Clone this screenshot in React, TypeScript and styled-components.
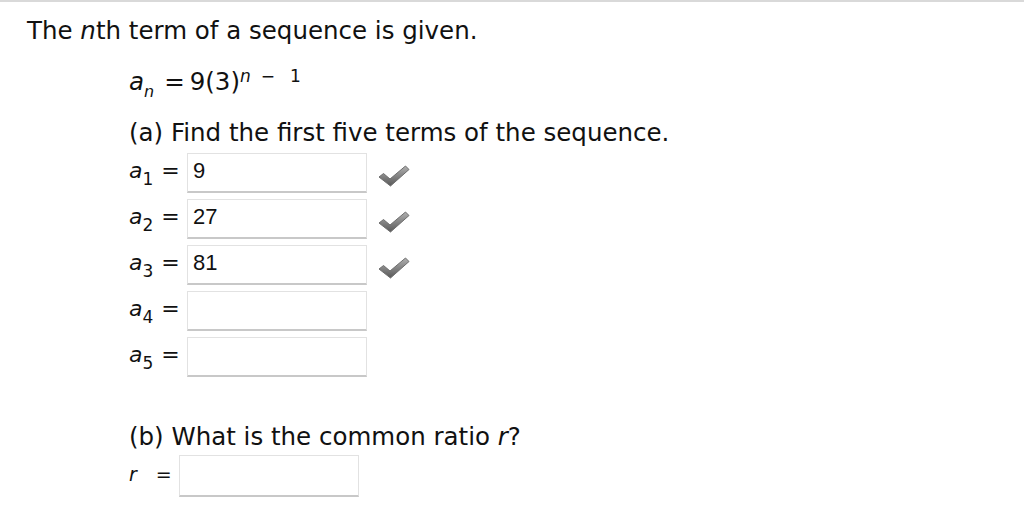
import React from "react";
import styled, { createGlobalStyle } from "styled-components";

const Global = createGlobalStyle`
  html, body { margin: 0; padding: 0; background: #fff; }
  body { font-family: "DejaVu Sans", Verdana, sans-serif; color: #111; }
`;

const Page = styled.div`
  border-top: 2px solid #d9d9d9;
  padding: 15px 0 0 27px;
  font-size: 24.5px;
  line-height: 28px;
`;

const Intro = styled.div`
  margin-bottom: 23px;
`;

const Block = styled.div`
  padding-left: 102px;
  display: flex;
  flex-direction: column;
`;

const Formula = styled.div`
  margin-bottom: 23px;
  white-space: nowrap;
`;

const Part = styled.div<{ $gap?: number }>`
  margin-top: ${(p) => p.$gap ?? 0}px;
  margin-bottom: 3px;
`;

const Var = styled.i`
  font-style: italic;
`;

const Sub = styled.sub<{ $size?: number }>`
  font-size: ${(p) => p.$size ?? 16}px;
  vertical-align: -7px;
  line-height: 0;
`;

const Sup = styled.sup`
  font-size: 17px;
  vertical-align: 8px;
  line-height: 0;
`;

const Op = styled.span<{ $l: number; $r: number }>`
  margin: 0 ${(p) => p.$r}px 0 ${(p) => p.$l}px;
`;

const Row = styled.div<{ $h?: number }>`
  display: flex;
  align-items: center;
  height: ${(p) => p.$h ?? 46}px;
`;

const Label = styled.div<{ $w: number; $size?: number }>`
  width: ${(p) => p.$w}px;
  white-space: pre;
  padding-bottom: 5px;
  font-size: ${(p) => p.$size ?? 22}px;
`;

const Box = styled.div<{ $h?: number }>`
  width: 173px;
  height: ${(p) => p.$h ?? 33}px;
  border: 1px solid #e2e2e2;
  border-bottom: 2px solid #c8c8c8;
  display: flex;
  align-items: center;
  padding: 0 0 4px 5px;
  box-sizing: content-box;
  font-family: "Liberation Sans", Arial, sans-serif;
  font-size: 22px;
  color: #111;
`;

const Check = styled.svg`
  margin: 6px 0 0 10px;
  width: 34px;
  height: 24px;
`;

const CheckMark = () => (
  <Check viewBox="0 0 34 24">
    <defs>
      <linearGradient id="cg" x1="0" y1="0" x2="0" y2="1">
        <stop offset="0" stopColor="#b0b0b0" />
        <stop offset="1" stopColor="#585858" />
      </linearGradient>
    </defs>
    <path
      d="M2 13 L6.5 9.5 L13 15 L28.5 2 L32 5.5 L13.5 22 Z"
      fill="url(#cg)"
      stroke="#6e6e6e"
      strokeWidth="1"
      strokeLinejoin="round"
    />
  </Check>
);

const answers: string[] = ["9", "27", "81", "", ""];

export default function App() {
  return (
    <>
      <Global />
      <Page>
        <Intro>
          The <Var>n</Var>th term of a sequence is given.
        </Intro>
        <Block>
          <Formula>
            <Var>a</Var>
            <Sub>
              <Var>n</Var>
            </Sub>
            <Op $l={10} $r={5}>=</Op>9(3)
            <Sup>
              <Var>n</Var>
              <Op $l={10} $r={15}>−</Op>1
            </Sup>
          </Formula>
          <Part>(a) Find the first five terms of the sequence.</Part>
          {answers.map((v, i) => (
            <Row key={i}>
              <Label $w={58}>
                <Var>a</Var>
                <Sub $size={17}>{i + 1}</Sub>
                <Op $l={8} $r={0}>=</Op>
              </Label>
              <Box>{v}</Box>
              {v ? <CheckMark /> : null}
            </Row>
          ))}
          <Part $gap={43}>
            (b) What is the common ratio <Var>r</Var>?
          </Part>
          <Row $h={44}>
            <Label $w={50} $size={19}>
              <Var>r</Var>
              <Op $l={19} $r={0}>=</Op>
            </Label>
            <Box $h={35} />
          </Row>
        </Block>
      </Page>
    </>
  );
}
